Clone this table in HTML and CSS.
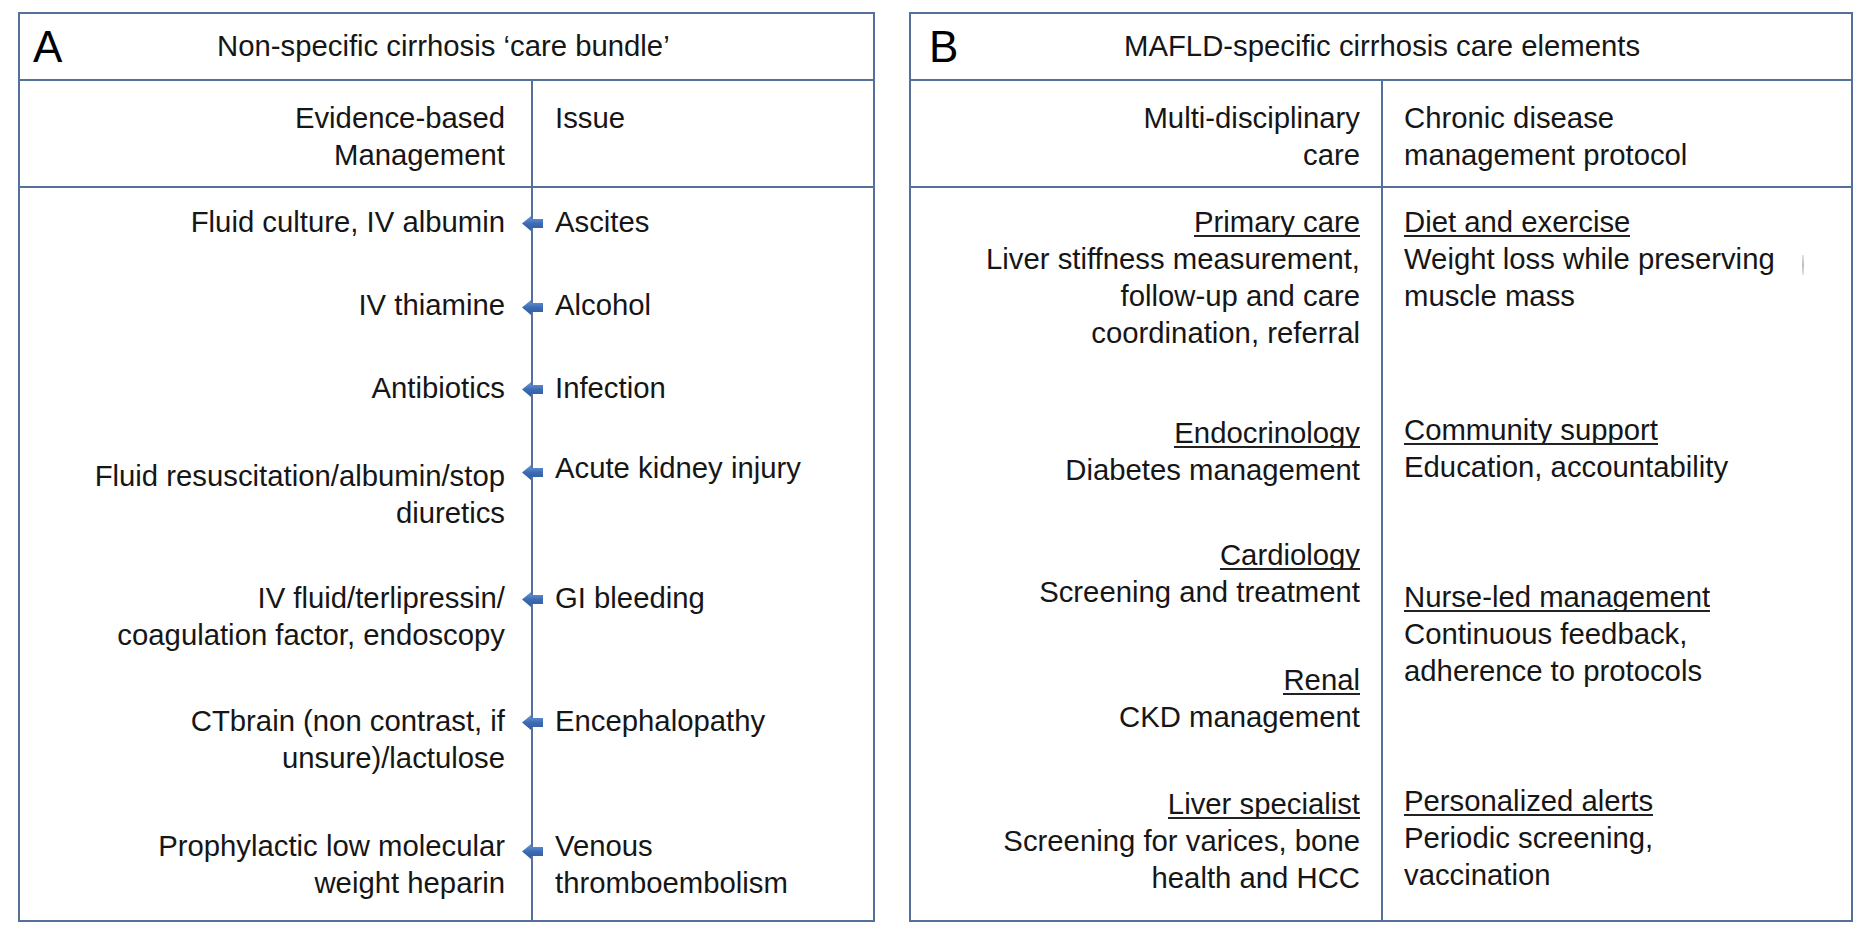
FILE: index.html
```html
<!DOCTYPE html>
<html lang="en">
<head>
<meta charset="utf-8">
<title>Cirrhosis care</title>
<link rel="stylesheet" href="styles.css">
</head>
<body>
<div class="page">
  <section class="panel panel-a">
    <header class="head">
      <span class="letter letter-a">A</span>
      <span class="title">Non-specific cirrhosis ‘care bundle’</span>
    </header>
    <div class="cols cols-a colhead">
      <div class="cell left">Evidence-based<br>Management</div>
      <div class="cell right">Issue</div>
    </div>
    <div class="cols cols-a body-a">
      <div class="cell left">Fluid culture, IV albumin</div>
      <div class="cell right"><svg class="arrow" viewBox="0 0 21 15"><use href="#arr"/></svg>Ascites</div>
      <div class="cell left">IV thiamine</div>
      <div class="cell right"><svg class="arrow" viewBox="0 0 21 15"><use href="#arr"/></svg>Alcohol</div>
      <div class="cell left">Antibiotics</div>
      <div class="cell right"><svg class="arrow" viewBox="0 0 21 15"><use href="#arr"/></svg>Infection</div>
      <div class="cell left shift">Fluid resuscitation/albumin/stop<br>diuretics</div>
      <div class="cell right"><svg class="arrow arrow-low" viewBox="0 0 21 15"><use href="#arr"/></svg>Acute kidney injury</div>
      <div class="cell left">IV fluid/terlipressin/<br>coagulation factor, endoscopy</div>
      <div class="cell right"><svg class="arrow" viewBox="0 0 21 15"><use href="#arr"/></svg>GI bleeding</div>
      <div class="cell left">CTbrain (non contrast, if<br>unsure)/lactulose</div>
      <div class="cell right"><svg class="arrow" viewBox="0 0 21 15"><use href="#arr"/></svg>Encephalopathy</div>
      <div class="cell left">Prophylactic low molecular<br>weight heparin</div>
      <div class="cell right"><svg class="arrow arrow-low" viewBox="0 0 21 15"><use href="#arr"/></svg>Venous<br>thromboembolism</div>
      <div class="cell left"></div>
      <div class="cell right"></div>
    </div>
  </section>

  <section class="panel panel-b">
    <header class="head">
      <span class="letter letter-b">B</span>
      <span class="title">MAFLD-specific cirrhosis care elements</span>
    </header>
    <div class="cols cols-b colhead">
      <div class="cell left">Multi-disciplinary<br>care</div>
      <div class="cell right">Chronic disease<br>management protocol</div>
    </div>
    <div class="cols cols-b body-b">
      <div class="cell left">
        <div class="block"><span class="u">Primary care</span><br>Liver stiffness measurement,<br>follow-up and care<br>coordination, referral</div>
        <div class="block gl2"><span class="u">Endocrinology</span><br>Diabetes management</div>
        <div class="block gl3"><span class="u">Cardiology</span><br>Screening and treatment</div>
        <div class="block gl4"><span class="u">Renal</span><br>CKD management</div>
        <div class="block gl5"><span class="u">Liver specialist</span><br>Screening for varices, bone<br>health and HCC</div>
      </div>
      <div class="cell right">
        <div class="block"><span class="u">Diet and exercise</span><br>Weight loss while preserving<br>muscle mass<span class="speck"></span></div>
        <div class="block gr2"><span class="u">Community support</span><br>Education, accountability</div>
        <div class="block gr3"><span class="u">Nurse-led management</span><br>Continuous feedback,<br>adherence to protocols</div>
        <div class="block gr4"><span class="u">Personalized alerts</span><br>Periodic screening,<br>vaccination</div>
      </div>
    </div>
  </section>
</div>

<svg class="defs" width="0" height="0" aria-hidden="true">
  <defs>
    <linearGradient id="ag" x1="0" y1="0" x2="0" y2="1">
      <stop offset="0" stop-color="#6f9bd8"/>
      <stop offset="0.5" stop-color="#3d6cb5"/>
      <stop offset="1" stop-color="#2f5a9e"/>
    </linearGradient>
    <path id="arr" d="M0 7.5 L9 0 L9 3 L21 3 L21 12 L9 12 L9 15 Z" fill="url(#ag)"/>
  </defs>
</svg>
</body>
</html>
```

FILE: styles.css
```css
html, body {
  margin: 0;
  padding: 0;
  background: #ffffff;
}

body {
  font-family: "Liberation Sans", Arial, Helvetica, sans-serif;
  font-size: 29.3px;
  line-height: 37px;
  color: #161616;
}

.page {
  display: flex;
  gap: 34px;
  padding: 12px 0 0 18px;
}

.panel {
  box-sizing: border-box;
  height: 910px;
  border: 2px solid #56709c;
  display: flex;
  flex-direction: column;
}

.panel-a { width: 857px; }
.panel-b { width: 944px; }

.head {
  box-sizing: border-box;
  height: 67px;
  flex: none;
  border-bottom: 2px solid #56709c;
  display: flex;
  align-items: center;
  white-space: nowrap;
}

.letter {
  font-size: 44px;
  line-height: 44px;
  color: #000;
}

.letter-a { padding-left: 13px; width: 184px; }
.letter-b { padding-left: 18px; width: 195px; }

.title {
  padding-bottom: 3px;
}

.cols {
  display: grid;
}

.cols-a { grid-template-columns: 511px 1fr; }
.cols-b { grid-template-columns: 470px 1fr; }

.colhead {
  box-sizing: border-box;
  height: 107px;
  flex: none;
  border-bottom: 2px solid #56709c;
}

.colhead .cell {
  padding-top: 18px;
}

.cell {
  box-sizing: border-box;
  white-space: nowrap;
}

.cell.left {
  text-align: right;
}

.cols-a .cell.left { padding-right: 26px; }
.cols-a .cell.right { padding-left: 22px; }
.cols-b .cell.left { padding-right: 21px; }
.cols-b .cell.right { padding-left: 21px; }

.cell.right {
  border-left: 2px solid #56709c;
  position: relative;
}

.body-a {
  flex: 1;
  grid-template-rows: 83.5px 82.5px 80px 130px 123px 125.5px 1fr;
}

.body-a .cell {
  padding-top: 14.5px;
}

.body-a .cell.shift {
  padding-top: 23px;
}

.arrow {
  position: absolute;
  left: -11px;
  top: 28px;
  width: 21px;
  height: 15px;
}

.arrow-low {
  top: 31px;
}

.body-b {
  flex: 1;
}

.body-b .cell {
  padding-top: 14.5px;
}

.block { position: relative; }

.gl2 { margin-top: 63.5px; }
.gl3 { margin-top: 47.5px; }
.gl4 { margin-top: 51.5px; }
.gl5 { margin-top: 50px; }

.gr2 { margin-top: 97px; }
.gr3 { margin-top: 93px; }
.gr4 { margin-top: 93px; }

.u {
  display: inline-block;
  vertical-align: top;
  height: 32px;
  overflow: hidden;
  border-bottom: 2px solid #222;
}

.speck {
  position: absolute;
  left: 398px;
  top: 52px;
  width: 2px;
  height: 20px;
  background: linear-gradient(#e4e4e4, #bdbdbd 50%, #e4e4e4);
}

.defs {
  position: absolute;
  width: 0;
  height: 0;
}
```
